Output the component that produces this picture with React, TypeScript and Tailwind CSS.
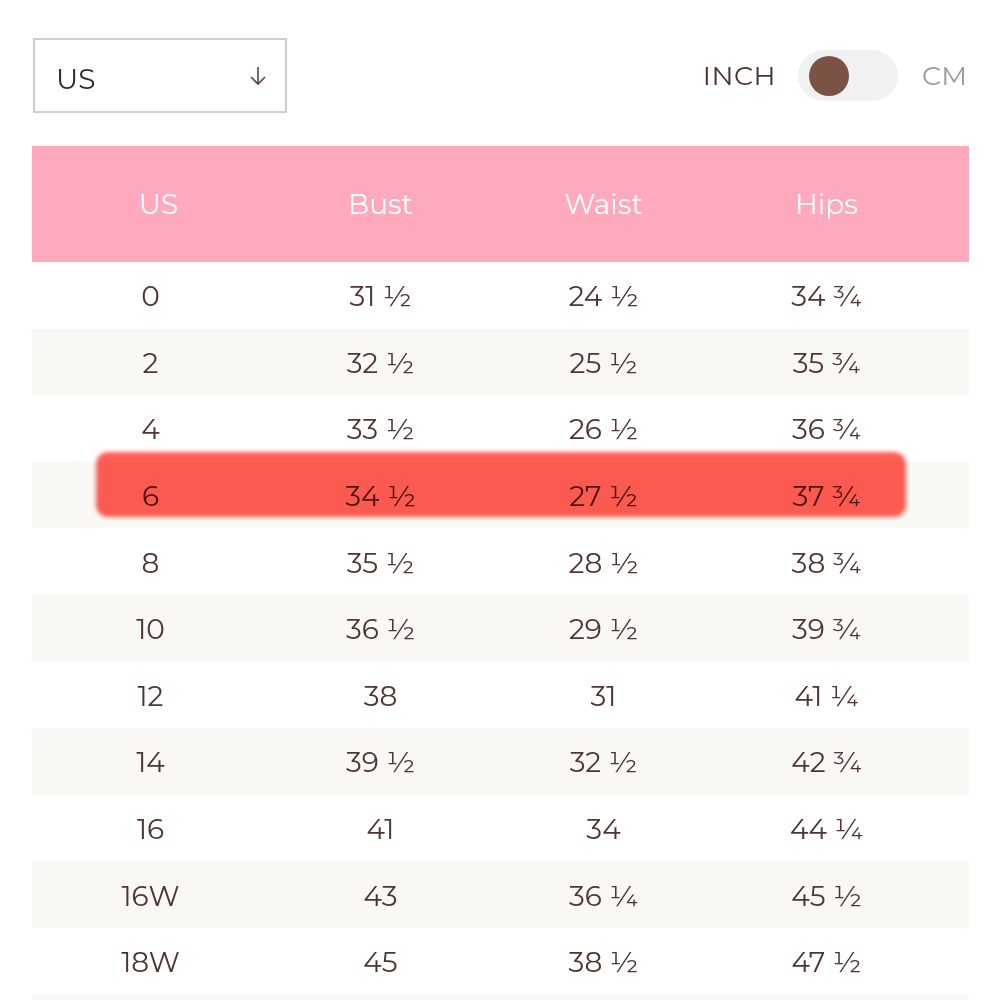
import React from "react";

const rows: [string, string, string, string][] = [
  ["0", "31 ½", "24 ½", "34 ¾"],
  ["2", "32 ½", "25 ½", "35 ¾"],
  ["4", "33 ½", "26 ½", "36 ¾"],
  ["6", "34 ½", "27 ½", "37 ¾"],
  ["8", "35 ½", "28 ½", "38 ¾"],
  ["10", "36 ½", "29 ½", "39 ¾"],
  ["12", "38", "31", "41 ¼"],
  ["14", "39 ½", "32 ½", "42 ¾"],
  ["16", "41", "34", "44 ¼"],
  ["16W", "43", "36 ¼", "45 ½"],
  ["18W", "45", "38 ½", "47 ½"],
];

export default function App() {
  return (
    <div
      className="relative w-[1000px] h-[1000px] overflow-hidden bg-white"
      style={{ fontFamily: "Montserrat, 'Noto Sans', 'Open Sans', sans-serif" }}
    >
      <div className="flex items-center justify-between pl-[33px] pr-[33px] pt-[38px]">
        <div className="flex h-[75px] w-[254px] items-center justify-between border-2 border-[#cfcfcf] pl-[21px] pr-[18px]">
          <span className="pt-[6px] text-[28px] text-[#2e2e2e]">US</span>
          <svg width="18" height="22" viewBox="0 0 18 22" fill="none" stroke="#5a4540" strokeWidth="1.6">
            <path d="M9 2v17M2 12l7 7 7-7" />
          </svg>
        </div>
        <div className="flex items-center">
          <span className="pt-[2px] text-[27px] text-[#4a322c] tracking-[0.5px]">INCH</span>
          <div className="ml-[22px] flex h-[51px] w-[100px] items-center rounded-full bg-[#f1f1f1] pl-[11px]">
            <div className="h-[40px] w-[40px] rounded-full bg-[#7a5344]" />
          </div>
          <span className="ml-[24px] pt-[2px] text-[27px] text-[#9a9a9a]">CM</span>
        </div>
      </div>

      <div className="mt-[33px] ml-[32px] w-[937px]">
        <div className="grid h-[116px] grid-cols-[237px_223px_223px_223px_1fr] items-center bg-[#ffa9be] text-[28px] text-white">
          <div className="pl-[16px] text-center">US</div>
          <div className="text-center">Bust</div>
          <div className="text-center">Waist</div>
          <div className="text-center">Hips</div>
          <div />
        </div>
        {rows.map((r, i) => (
          <div
            key={i}
            className={
              "grid h-[66.6px] grid-cols-[237px_223px_223px_223px_1fr] items-center pt-[2px] text-[28px] text-[#4e3631] " +
              (i % 2 === 1 ? "bg-[#faf8f5]" : "bg-white")
            }
          >
            <div className="text-center">{r[0]}</div>
            <div className="text-center">{r[1]}</div>
            <div className="text-center">{r[2]}</div>
            <div className="text-center">{r[3]}</div>
            <div />
          </div>
        ))}
        <div className="h-[66.6px] bg-[#faf8f5]" />
      </div>

      <div className="pointer-events-none absolute left-[96px] top-[452px] h-[65px] w-[810px] rounded-[12px] bg-[#ff4a40] opacity-90 mix-blend-multiply blur-[2px]" />
    </div>
  );
}
